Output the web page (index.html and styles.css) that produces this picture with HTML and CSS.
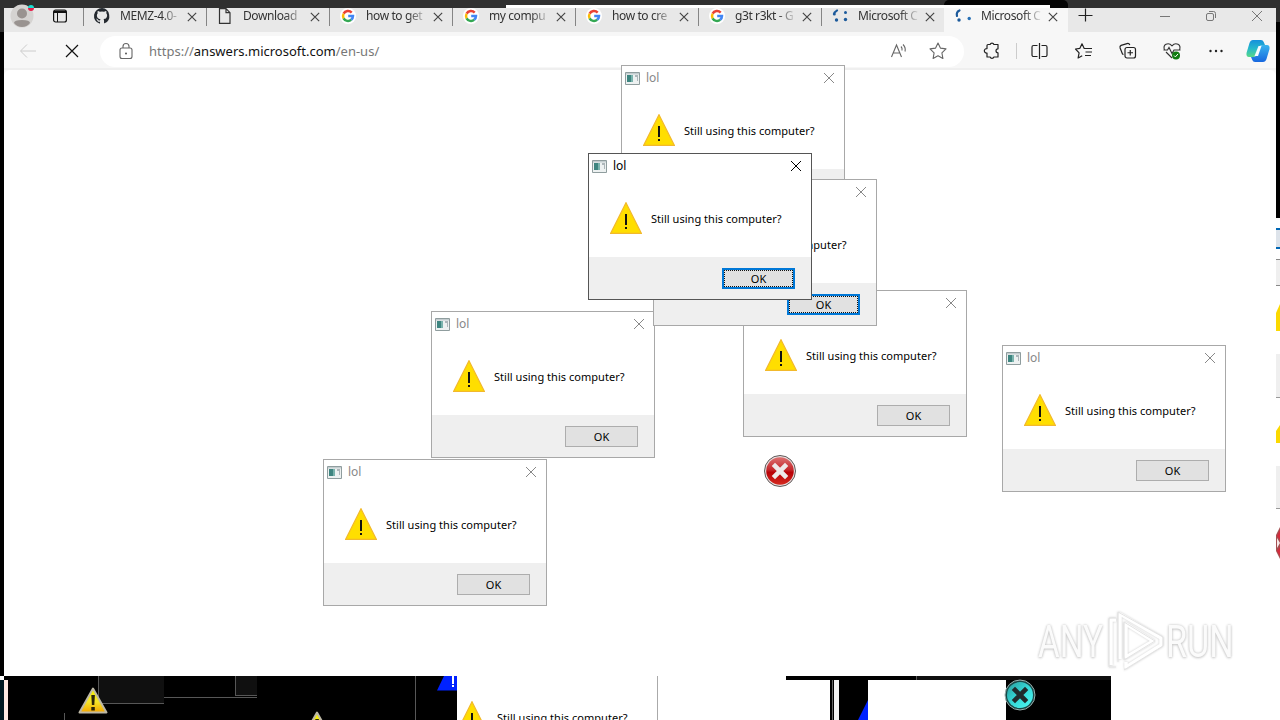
FILE: index.html
```html
<!DOCTYPE html>
<html lang="en">
<head>
<meta charset="utf-8">
<title>Desktop</title>
<link rel="stylesheet" href="styles.css">
</head>
<body>
<svg class="defs" width="0" height="0">
  <defs>
    <linearGradient id="gold" x1="0" y1="0" x2="0" y2="1"><stop offset="0" stop-color="#f4f000"/><stop offset=".55" stop-color="#f5e528"/><stop offset="1" stop-color="#f3a500"/></linearGradient>
    <linearGradient id="red" x1="0" y1="0" x2="0" y2="1"><stop offset="0" stop-color="#dc7070"/><stop offset=".45" stop-color="#c5282c"/><stop offset=".55" stop-color="#b80006"/><stop offset="1" stop-color="#d52a20"/></linearGradient>
    <linearGradient id="cyan" x1="0" y1="0" x2="1" y2="1"><stop offset="0" stop-color="#2a9c9c"/><stop offset=".5" stop-color="#35d8d8"/><stop offset="1" stop-color="#4ffaf5"/></linearGradient>
    <linearGradient id="cpa" x1="0" y1="0" x2="0" y2="1"><stop offset="0" stop-color="#1590dc"/><stop offset=".5" stop-color="#25b8cb"/><stop offset="1" stop-color="#57d887"/></linearGradient>
    <linearGradient id="cpb" x1="0" y1="0" x2="0" y2="1"><stop offset="0" stop-color="#38b4ee"/><stop offset="1" stop-color="#1767df"/></linearGradient>
  </defs>
  <symbol id="close" viewBox="0 0 12 12"><path d="M1 1l10 10M11 1L1 11" fill="none" stroke="currentColor"/></symbol>
  <symbol id="warn" viewBox="0 0 32 32"><path d="M16 .7L31.3 31.3H.7z" fill="#ffde00" stroke="#f2b92c" stroke-width="1.2"/><path d="M15 12h2v11h-2zM15 25h2v2h-2z" fill="#111"/></symbol>
  <symbol id="app" viewBox="0 0 15 13"><path d="M.5.5h14v12H.5z" fill="#edf1f1" stroke="#8f9d9e"/><path d="M1 1h13v1.500H1z" fill="#c3cccf"/><path d="M2 3h6v7H2z" fill="#3e8580"/><path d="M6 3h2v7H6z" fill="#7ab3ad"/><path d="M10 3h3v2h-3zM12 5h1v4h-1z" fill="#adb6ba"/></symbol>
  <symbol id="google" viewBox="0 0 16 16"><circle cx="8" cy="8" r="8" fill="#fff"/><g fill="none" stroke-width="2.500"><path d="M11.700 4.600A5 5 0 0 0 3.600 5.700" stroke="#ea4335"/><path d="M3.600 5.700a5 5 0 0 0 0 4.600" stroke="#fbbc05"/><path d="M3.600 10.300a5 5 0 0 0 7.600 1.500" stroke="#34a853"/><path d="M8.200 8H13a5 5 0 0 1-1.800 3.800" stroke="#4285f4"/></g></symbol>
  <symbol id="error" viewBox="0 0 32 32"><circle cx="16" cy="16" r="15.500" fill="#e8dede" stroke="#605858"/><circle cx="16" cy="16" r="13.800" fill="url(#red)"/><path d="M11 11l10 10M21 11L11 21" stroke="#eee9e9" stroke-width="4.600" stroke-linecap="square"/></symbol>
  <symbol id="gwarn" viewBox="0 0 30 27"><path d="M15 1.500L28.500 25.500h-27z" fill="url(#gold)" stroke="#bdb8a5" stroke-width="2" stroke-linejoin="round"/><path d="M13.300 8h3.600l-.6 10h-2.400zM13.300 20h3.500v3.500h-3.500z" fill="#2c2508"/></symbol>
</svg>

<div class="screen">
  <div class="shade active-shadow"></div>
  <div class="shade top-line"></div>
  <div class="right-sliver">
    <div class="sliver-button"></div><div class="sliver-foot"></div>
    <svg class="sliver-warn first" viewBox="0 0 4 27"><path d="M4 0v27H0V9z" fill="#fbd900"/></svg>
    <div class="sliver-gap"></div>
    <svg class="sliver-warn second" viewBox="0 0 4 18"><path d="M4 0v18H0V6z" fill="#fbd900"/></svg>
    <div class="sliver-gap low"></div>
    <svg class="sliver-error" viewBox="0 0 4 32"><path d="M4 0v32L0 24V8z" fill="#a54f51"/><path d="M4 3v10L1 9zM4 20v9l-3-5z" fill="#d52a3c"/><path d="M1 11l3 5-3 5z" fill="#f8e9e9"/></svg>
  </div>

  <main class="browser">
    <header class="tabs">
      <div class="lead">
        <svg class="avatar" viewBox="0 0 24 20"><circle cx="12" cy="8" r="11.500" fill="#d5d3d1"/><circle cx="12" cy="5.500" r="5" fill="#999390"/><path d="M4 15q0-3 8-3t8 3q-3 4-8 4t-8-4" fill="#999390"/></svg>
        <svg class="workspace" viewBox="0 0 16 16"><rect x="1.600" y="2" width="12.800" height="12" rx="2" fill="none" stroke="#111" stroke-width="1.200"/><path d="M2 2.500h12V5H2z" fill="#111"/><path d="M5.500 5v9" stroke="#111"/></svg>
      </div>
      <div class="tab"><svg class="fav" viewBox="0 0 16 16"><path fill="#24292f" d="M8 0a8 8 0 0 0-2.530 15.590c.4.070.55-.17.550-.38v-1.500C4 14.100 3.500 13 3.300 12.500c-.1-.3-.5-.95-.8-1.150-.3-.15-.7-.55 0-.55.600 0 1.100.58 1.250.8.700 1.200 1.850.86 2.300.65.070-.5.280-.86.500-1.060C4.700 11 2.900 10.300 2.900 7.300c0-.9.300-1.600.8-2.150-.1-.2-.36-1 .1-2.100 0 0 .65-.2 2.200.8a7.400 7.400 0 0 1 4 0c1.500-1 2.200-.8 2.200-.8.400 1.100.15 1.900.1 2.100.5.550.8 1.250.8 2.150 0 3.050-1.850 3.700-3.600 3.900.3.250.54.730.54 1.480v2.200c0 .2.150.45.550.38A8 8 0 0 0 8 0"/></svg><span class="title">MEMZ-4.0-</span><svg class="x"><use href="#close"/></svg></div>
      <div class="tab"><svg class="fav" viewBox="0 0 16 16"><path d="M2.500 .7h6.500l4 4v10.600H2.500zM9 .7v4h4" fill="none" stroke="#333" stroke-width="1.200"/></svg><span class="title">Download</span><svg class="x"><use href="#close"/></svg></div>
      <div class="tab"><svg class="fav"><use href="#google"/></svg><span class="title">how to get</span><svg class="x"><use href="#close"/></svg></div>
      <div class="tab"><svg class="fav"><use href="#google"/></svg><span class="title">my compu</span><svg class="x"><use href="#close"/></svg></div>
      <div class="tab"><svg class="fav"><use href="#google"/></svg><span class="title">how to cre</span><svg class="x"><use href="#close"/></svg></div>
      <div class="tab"><svg class="fav"><use href="#google"/></svg><span class="title">g3t r3kt - G</span><svg class="x"><use href="#close"/></svg></div>
      <div class="tab"><svg class="fav" viewBox="0 0 16 16"><g fill="#1c5a9b"><path d="M2.500 4.500l2.500-2" stroke="#1c5a9b" stroke-width="2.200" stroke-linecap="round"/><circle cx="2.300" cy="6" r="1.500"/><circle cx="4.500" cy="12" r="1.700"/><circle cx="13.500" cy="4.500" r="1.500"/><circle cx="13.500" cy="11.500" r="1.700"/></g></svg><span class="title">Microsoft C</span><svg class="x"><use href="#close"/></svg></div>
      <div class="tab active"><svg class="fav" viewBox="0 0 16 16"><path d="M4.500 2.500Q1 4 2 8" fill="none" stroke="#1c5a9b" stroke-width="2.200" stroke-linecap="round"/><circle cx="4" cy="12" r="1.700" fill="#1c5a9b"/><circle cx="14.200" cy="10.500" r="1.700" fill="#2870b5"/></svg><span class="title">Microsoft C</span><svg class="x"><use href="#close"/></svg></div>
      <svg class="plus" viewBox="0 0 14 14"><path d="M7.500 .5v13M.5 7.500h14" stroke="#222" stroke-width="1.200"/></svg>
      <div class="winctl">
        <svg viewBox="0 0 12 12"><path d="M1 6.500h10" stroke="#777"/></svg>
        <svg viewBox="0 0 12 12"><g fill="none" stroke="#777"><rect x="1.500" y="3.500" width="7" height="7" rx="1.500"/><path d="M4 1.500h4.500a2 2 0 0 1 2 2V8"/></g></svg>
        <svg><use href="#close"/></svg>
      </div>
    </header>
    <nav class="toolbar">
      <div class="tool"><svg viewBox="0 0 20 20"><path d="M18 10H3m6-6.500L2.500 10 9 16.500" fill="none" stroke="#ccc"/></svg></div>
      <div class="tool"><svg viewBox="0 0 20 20"><path d="M4 4l12 12M16 4L4 16" stroke="#111" stroke-width="1.200"/></svg></div>
      <div class="address">
        <svg class="lock" viewBox="0 0 16 18"><g fill="none" stroke="#666" stroke-width="1.100"><rect x="2" y="6" width="12" height="10.500" rx="2"/><path d="M5 6V4.500a3 3 0 0 1 6 0V6"/></g><circle cx="8" cy="11.500" r="1" fill="#555"/></svg>
        <span class="url"><i>https://</i>answers.microsoft.com<i>/en-us/</i></span>
        <svg class="read" viewBox="0 0 20 20"><path d="M2.500 16L7.500 4l5 12M4.200 12h6.600M12 5.500q1.500 1.500 1 4M14 3.500q3 3 2 7" fill="none" stroke="#666" stroke-width="1.100"/></svg>
        <svg class="star" viewBox="0 0 20 20"><path d="M10 2l2.400 5.100 5.600.8-4.100 4 1 5.600-4.900-2.700-4.900 2.700 1-5.600-4.100-4 5.600-.8z" fill="none" stroke="#666" stroke-width="1.100" stroke-linejoin="round"/></svg>
      </div>
      <div class="tool ext"><svg viewBox="0 0 20 20"><path d="M6 3.500h2.100a2 2 0 0 1 3.800 0H16v4.300a2 2 0 1 0 0 4V16h-4.100a2 2 0 0 1-3.800 0H5v-4a2.200 2.200 0 1 1 0-4.300V4.500q0-1 1-1z" fill="none" stroke="#222" stroke-width="1.200" stroke-linejoin="round"/></svg></div>
      <div class="divider"></div>
      <div class="tool split"><svg viewBox="0 0 20 20"><path d="M7.500 4.500h-4A1.500 1.500 0 0 0 2 6v8a1.500 1.500 0 0 0 1.500 1.500h4M11.500 4.500h4A1.500 1.500 0 0 1 17 6v8a1.500 1.500 0 0 1-1.500 1.500h-4M9.500 2v16" fill="none" stroke="#222" stroke-width="1.200"/></svg></div>
      <div class="tool"><svg viewBox="0 0 20 20"><path d="M14 7.500H10.200L8 2.800 5.900 7.300 1.500 8l3.600 3.800-1 5.200 4.100-2.200M11.500 11H18M11 14.500h6M14 7.500h4" fill="none" stroke="#222" stroke-width="1.200" stroke-linejoin="round"/></svg></div>
      <div class="tool"><svg viewBox="0 0 20 20"><g fill="none" stroke="#222" stroke-width="1.200"><rect x="7" y="6.500" width="10.500" height="10.500" rx="2"/><path d="M5.500 13.500l-1-.5-2.400-6q-.6-1.800 1-2.600L9 2.600q2-.6 2.800 1.400M12.250 9v5.500M9.500 11.750H15"/></g></svg></div>
      <div class="tool"><svg viewBox="0 0 20 20"><path d="M2.500 9Q1 5 4 3.300q3.300-1.500 6 1.500 2.700-3 6-1.500 3 1.700 1.500 5.700M4 11l6 6M1.500 9h4L7 6.500l3 6L12 9h6.500" fill="none" stroke="#333" stroke-width="1.100"/><circle cx="14" cy="14.500" r="4" fill="#107c10"/><path d="M12 14.500l1.400 1.400 2.600-3" fill="none" stroke="#fff"/></svg></div>
      <div class="tool"><svg viewBox="0 0 20 20"><g fill="#222"><circle cx="4.500" cy="10" r="1.200"/><circle cx="10" cy="10" r="1.200"/><circle cx="15.500" cy="10" r="1.200"/></g></svg></div>
      <svg class="copilot" viewBox="0 0 24 24"><path d="M7 1h8q2 0 2.700 2L19 6h-3q-2 0-3 3l-2.500 7q-1 2-3 2H3q-3 0-2.500-4L3.500 4Q4.500 1 7 1" fill="url(#cpa)"/><path d="M17 23H9q-2 0-2.700-2L5 18h3q2 0 3-3l2.500-7q1-2 3-2H21q3 0 2.500 4l-3 10q-1 3-3.500 3" fill="url(#cpb)"/><path d="M12.500 7h3l-3.500 10H8.500z" fill="#f5fbff"/></svg>
    </nav>
    <section class="page"></section>
  </main>
  <i class="badge"></i>

  <article class="dialog d1"><header><svg class="app"><use href="#app"/></svg><span>lol</span><svg class="x"><use href="#close"/></svg></header><div class="body"><svg class="warn"><use href="#warn"/></svg><p>Still using this computer?</p></div><footer><button>OK</button></footer></article>
  <article class="dialog d2"><header><svg class="app"><use href="#app"/></svg><span>lol</span><svg class="x"><use href="#close"/></svg></header><div class="body"><svg class="warn"><use href="#warn"/></svg><p>Still using this computer?</p></div><footer><button>OK</button></footer></article>
  <article class="dialog d3"><header><svg class="app"><use href="#app"/></svg><span>lol</span><svg class="x"><use href="#close"/></svg></header><div class="body"><svg class="warn"><use href="#warn"/></svg><p>Still using this computer?</p></div><footer><button>OK</button></footer></article>
  <article class="dialog d4"><header><svg class="app"><use href="#app"/></svg><span>lol</span><svg class="x"><use href="#close"/></svg></header><div class="body"><svg class="warn"><use href="#warn"/></svg><p>Still using this computer?</p></div><footer><button>OK</button></footer></article>
  <article class="dialog d5"><header><svg class="app"><use href="#app"/></svg><span>lol</span><svg class="x"><use href="#close"/></svg></header><div class="body"><svg class="warn"><use href="#warn"/></svg><p>Still using this computer?</p></div><footer><button>OK</button></footer></article>
  <article class="dialog d6"><header><svg class="app"><use href="#app"/></svg><span>lol</span><svg class="x"><use href="#close"/></svg></header><div class="body"><svg class="warn"><use href="#warn"/></svg><p>Still using this computer?</p></div><footer><button class="focus">OK</button></footer></article>
  <article class="dialog d7 current"><header><svg class="app"><use href="#app"/></svg><span>lol</span><svg class="x"><use href="#close"/></svg></header><div class="body"><svg class="warn"><use href="#warn"/></svg><p>Still using this computer?</p></div><footer><button class="focus">OK</button></footer></article>

  <svg class="error"><use href="#error"/></svg>

  <div class="watermark">
    <span>ANY</span>
    <svg viewBox="0 0 60 64"><g fill="none" stroke="#fff" stroke-width="3.500" stroke-linejoin="round"><path d="M14 49V4l41 24v7L20 57v-5"/><path d="M10 10H5v45"/><path d="M20 14v33l27-16z"/></g><g fill="none" stroke="#e3e3e3" stroke-width="1"><path d="M12 52V2l45 25v9L18 60"/><path d="M10 8H3v49h7"/><path d="M18 12v38l31-19z"/></g></svg>
    <span class="run">RUN</span>
  </div>

  <div class="residue">
    <div class="corner"></div><div class="teal"></div><div class="peach"></div>
    <div class="ghost g1"></div><div class="ghost g2"></div><div class="hair h1"></div><div class="hair h2"></div><div class="hair h3"></div>
    <svg class="gw a"><use href="#gwarn"/></svg><svg class="gw b"><use href="#gwarn"/></svg>
    <svg class="blue" viewBox="0 0 20 15"><path d="M0 14.500L7 0h13v14.500z" fill="#0022ff"/><path d="M15 0h2v8h-2zM15 9h2v2h-2z" fill="#fff"/></svg>
    <div class="remnant"><svg class="warn"><use href="#warn"/></svg><p>Still using this computer?</p></div>
    <div class="blank b1"></div><div class="bar"></div><div class="blank b2"></div><div class="blank b3"></div><div class="blank b4"></div><div class="strip"></div>
    <svg class="blue2" viewBox="0 0 10 20"><path d="M10 0v20H0z" fill="#0022ff"/></svg>
    <svg class="cyan" viewBox="0 0 32 32"><circle cx="16" cy="16" r="15" fill="#174848" stroke="#9cb0ae"/><circle cx="16" cy="16" r="13" fill="url(#cyan)"/><path d="M11 11l10 10M21 11l-10 10" stroke="#202a2c" stroke-width="4.600" stroke-linecap="square"/></svg>
  </div>
</div>
</body>
</html>
```
FILE: styles.css
```css
* { box-sizing: border-box; }
body { margin: 0; font-family: "Noto Sans", "Open Sans", sans-serif; }
.defs { position: absolute; }
.screen { position: relative; width: 1280px; height: 720px; overflow: hidden; background: linear-gradient(#303030 0 8px, transparent 8px), #000; }
.screen::before { content: ""; position: absolute; left: 0; top: 0; width: 4px; height: 32px; background: #303030; }
.screen svg { display: block; flex: none; overflow: visible; }
.shade { position: absolute; }
.active-shadow { left: 944px; top: 0; width: 124px; height: 10px; background: #050505; border-radius: 5px 5px 0 0; }
.top-line { left: 506px; top: 5px; width: 544px; height: 3px; background: #fff; }

.browser { position: absolute; left: 4px; top: 8px; width: 1272px; height: 668px; display: flex; flex-direction: column; background: #f7f7f7; }
.tabs { height: 24px; display: flex; background: #e8e8e8; }
.lead { width: 79px; display: flex; flex: none; padding-left: 6px; }
.avatar { width: 24px; height: 20px; }
.workspace { width: 16px; height: 16px; margin: 0 0 0 18px; }
.tab { width: 123px; height: 24px; display: flex; flex: none; position: relative; padding-left: 10px; }
.tab::before { content: ""; position: absolute; left: 0; top: 0; width: 1px; height: 18px; background: #858585; }
.fav { width: 16px; height: 16px; margin: 0 10px 0 1px; }
.tab .title { width: 62px; height: 18px; line-height: 16px; font-size: 12px; letter-spacing: -.4px; white-space: nowrap; color: #333; -webkit-mask-image: linear-gradient(90deg, #000 42px, transparent 62px); mask-image: linear-gradient(90deg, #000 42px, transparent 62px); }
.tab .x { width: 10px; height: 10px; margin: 4px 0 0 5px; color: #444; stroke-width: 1.4; }
.tab.active { width: 124px; background: #f7f7f7; }
.tab.active::before { display: none; }
.plus { width: 14px; height: 14px; margin: 0 0 0 10px; }
.winctl { display: flex; gap: 34px; margin: 2px 0 0 67px; color: #777; }
.winctl svg { width: 12px; height: 12px; }
.toolbar { height: 38px; display: flex; align-items: center; padding: 2px 0 0 2px; border-bottom: 2px solid #efefef; }
.tool { width: 44px; display: flex; justify-content: center; flex: none; }
.tool svg { width: 20px; height: 20px; }
.address { width: 864px; height: 31px; margin: 0 6px; padding-left: 18px; display: flex; align-items: center; flex: none; background: #fff; border-radius: 16px; }
.lock { width: 16px; height: 18px; margin-top: -1px; }
.url { width: 736px; margin: -1px 0 0 15px; font-size: 13px; line-height: 20px; color: #111; white-space: nowrap; }
.url i { font-style: normal; color: #777; }
.read, .star { width: 20px; height: 20px; }
.read { margin-left: 4px; }
.star { margin-left: 19px; }
.divider { width: 1px; height: 16px; margin: 0 2px; background: #ccc; }
.tool.split { margin-left: -1px; }
.copilot { width: 24px; height: 24px; margin-left: 8px; }
.page { flex: 1; background: #fff; border-radius: 6px 6px 0 0; }
.badge { position: absolute; left: 28px; top: 5px; width: 6px; height: 6px; border-radius: 50%; background: linear-gradient(#19ddd1 50%, #e61b48 50%); }

.dialog { position: absolute; width: 224px; height: 147px; display: flex; flex-direction: column; border: 1px solid #a8a8a8; background: #fff; }
.dialog header { height: 24px; display: flex; align-items: center; padding: 0 9px 0 3px; font-size: 12px; line-height: 16px; color: #888; }
.app { width: 15px; height: 13px; }
.dialog header span { margin-left: 6px; }
.dialog .x { width: 12px; height: 12px; margin-left: auto; }
.body { height: 79px; display: flex; padding: 24px 0 0 21px; }
.warn { width: 32px; height: 32px; }
.body p, .remnant p { margin: 9px 0 0 9px; font-size: 11px; line-height: 16px; letter-spacing: .03px; white-space: nowrap; color: #000; }
.dialog footer { flex: 1; display: flex; justify-content: flex-end; padding: 11px 16px 0 0; background: #efefef; }
.dialog button { width: 73px; height: 21px; padding: 0; border: 1px solid #adadad; background: #e1e1e1; font: 11px/18px "Noto Sans", sans-serif; color: #000; }
.dialog button.focus { border: 2px solid #0078d7; outline: 1px dotted #111; outline-offset: -3px; line-height: 17px; }
.current { border-color: #555; }
.dialog.current header { color: #000; }
.d1 { left: 621px; top: 65px; } .d2 { left: 743px; top: 290px; } .d3 { left: 431px; top: 311px; } .d4 { left: 323px; top: 459px; }
.d5 { left: 1002px; top: 345px; } .d6 { left: 653px; top: 179px; } .d7 { left: 588px; top: 153px; }
.error { position: absolute; left: 764px; top: 455px; width: 32px; height: 32px; }

.watermark { position: absolute; left: 1038px; top: 610px; height: 64px; display: flex; align-items: center; font-family: Roboto, sans-serif; font-size: 45px; line-height: 60px; color: #fbfbfb; }
.watermark span { width: 68px; white-space: nowrap; transform: scaleX(.74); transform-origin: left; text-shadow: 0 0 3px #c2c2c2, 0 1px 3px #d0d0d0; }
.watermark span.run { transform: scaleX(.76); }
.watermark svg { width: 60px; height: 64px; filter: drop-shadow(0 0 1px #ccc); }

.right-sliver { position: absolute; left: 1276px; top: 218px; width: 4px; height: 502px; background: #fff; }
.screen::after { content: ""; position: absolute; right: 0; top: 0; width: 4px; height: 22px; background: #303030; }
.right-sliver > * { position: absolute; left: 0; width: 4px; }
.sliver-button { top: 10px; height: 21px; background: #dde3ea; border: solid #0067b5; border-width: 2px 0; }
.sliver-foot { top: 41px; height: 27px; background: #efefef; border: solid #888; border-width: 1px 0; }
.sliver-warn.first { top: 86px; height: 27px; }
.sliver-gap { top: 136px; height: 44px; background: #efefef; border-bottom: 1px solid #999; }
.sliver-warn.second { top: 207px; height: 18px; }
.sliver-gap.low { top: 248px; height: 43px; }
.sliver-error { top: 309px; height: 32px; }

.residue { position: absolute; left: 0; top: 676px; width: 1280px; height: 44px; overflow: hidden; background: #000; }
.residue > * { position: absolute; }
.corner { left: 0; top: 0; width: 4px; height: 4px; background: #fff; }
.teal { left: 0; top: 4px; width: 4px; height: 40px; background: #001a22; }
.peach { left: 4px; top: 4px; width: 4px; height: 40px; background: #fdebe3; }
.ghost { top: 0; background: #101010; border: solid #575757; border-width: 0 0 1px 1px; }
.g1 { left: 98px; width: 66px; height: 28px; }
.g2 { left: 235px; width: 22px; height: 20px; }
.hair { background: #575757; }
.h1 { left: 164px; top: 21px; width: 93px; height: 1px; }
.h2 { left: 64px; top: 37px; width: 1px; height: 7px; }
.h3 { left: 415px; top: 0; width: 1px; height: 44px; }
.gw { width: 30px; height: 27px; }
.gw.a { left: 78px; top: 11px; }
.gw.b { left: 302px; top: 35px; }
.blue { left: 437px; top: 0; width: 20px; height: 15px; }
.remnant { left: 457px; top: 0; width: 201px; height: 44px; display: flex; background: #fff; border-right: 1px solid #aaa; padding: 25px 0 0; }
.remnant .warn { margin-left: -1px; }
.blank { background: #fff; top: 4px; height: 40px; }
.b1 { left: 658px; top: 0; width: 128px; height: 44px; }
.bar { left: 832px; top: 4px; width: 1px; height: 40px; background: #666; }
.b2 { left: 786px; width: 44px; }
.b3 { left: 834px; width: 5px; background: #f5f5f5; }
.b4 { left: 868px; width: 138px; }
.strip { left: 916px; top: 0; width: 195px; height: 4px; background: #101010; border-left: 1px solid #555; }
.blue2 { left: 858px; top: 24px; width: 10px; height: 20px; }
.cyan { left: 1004px; top: 3px; width: 32px; height: 32px; }
.residue::after { content: ""; position: absolute; left: 1111px; top: 0; right: 0; height: 44px; background: #fff; }
```
